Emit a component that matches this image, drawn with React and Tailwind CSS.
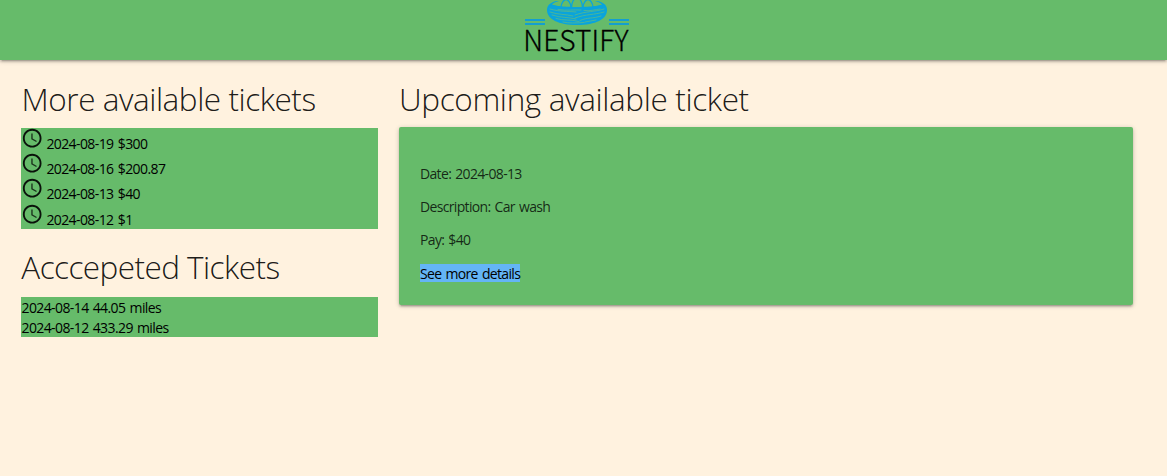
const tickets = [
  { date: "2024-08-19", pay: "$300" },
  { date: "2024-08-16", pay: "$200.87" },
  { date: "2024-08-13", pay: "$40" },
  { date: "2024-08-12", pay: "$1" },
];

const accepted = ["2024-08-14 44.05 miles", "2024-08-12 433.29 miles"];

function Clock() {
  return (
    <svg viewBox="0 0 24 24" className="-mt-[1.1px] mr-[3px] size-[22.4px] shrink-0 fill-black/90" aria-hidden="true">
      <path d="M11.99 2C6.47 2 2 6.48 2 12s4.47 10 9.99 10C17.52 22 22 17.52 22 12S17.52 2 11.99 2zM12 20c-4.42 0-8-3.58-8-8s3.58-8 8-8 8 3.58 8 8-3.58 8-8 8z" />
      <path d="M12.5 7H11v6l5.25 3.15.75-1.23-4.5-2.67z" fillOpacity=".8" />
    </svg>
  );
}

function Nest() {
  return (
    <svg viewBox="0 0 106 26" className="block h-[26px] w-[106px]" fill="none" aria-hidden="true">
      <g stroke="#139fd0" strokeWidth="1.8">
        <path d="M0 20H20M0 24H20M84 20H104M84 24H104" />
      </g>
      <path d="M22 10C22 6 24 3 31 1H73C80 3 82 6 82 10C82 19 71 25 52 25S22 19 22 10Z" fill="#09a4dc" />
      <path d="M27 4.500C29 2 34 1 38 0H66C70 1 75 2 77 4.500C71 6.500 65 7 52 7S33 6.500 27 4.500Z" fill="#66bb6a" />
      <g fill="#66bb6a" stroke="#09a4dc" strokeWidth="1.3">
        <path d="M36 7.500C36 3 39-.5 41-.5S46 3 46 7.500Z" />
        <path d="M58 7.500C58 3 61-.5 63-.5S68 3 68 7.500Z" />
        <path d="M46.500 8C46.500 2 49-2 52-2S57.500 2 57.500 8Z" />
      </g>
      <path d="M25 4.500C29 5.500 33 6 37 6.500C42 7.500 62 7.500 67 6.500C71 6 75 5.500 79 4.500V9H25Z" fill="#09a4dc" />
      <g stroke="#5dba86" strokeWidth=".75" strokeLinecap="round">
        <path d="M25 9C36 12 42 11 51 12M25 12C34 15 40 14 48 16M27 15C36 18 43 17 51 19M31 18.500C39 21 45 19 54 21.500M38 22C44 23.500 51 23 59 22.500" />
        <path d="M79 9C70 12 61 11 50 15M79 12C69 15 61 14 50 18M76 16C67 19 63 17 55 20.500M71 20C67 21 64 21 60 22M59 10.500C65 11.500 70 9.500 75 9M33 9.500C42 11 49 9.500 56 10" />
      </g>
    </svg>
  );
}

function Heading({ children, className }) {
  return <h4 className={`whitespace-nowrap text-[31.5px] font-[350] text-black/90 ${className}`}>{children}</h4>;
}

export default function App() {
  return (
    <div className="min-h-screen bg-[#fff2df] font-['Open_Sans','Noto_Sans',sans-serif] text-[14px] text-black">
      <header className="flex h-[60px] flex-col items-center overflow-hidden bg-[#66bb6a] pr-[12px] shadow-[0_2px_2px_0_rgba(0,0,0,0.14),0_3px_1px_-2px_rgba(0,0,0,0.12),0_1px_5px_0_rgba(0,0,0,0.2)]">
        <Nest />
        <div className="-mt-px whitespace-nowrap pr-[3px] font-['Noto_Sans_CJK_SC',sans-serif] text-[28px] font-light leading-[28px] tracking-[0.1px] [-webkit-text-stroke:0.3px_black]">NESTIFY</div>
      </header>
      <main className="grid grid-cols-[357px_734px] gap-[21px] pl-[21px] pt-[21px]">
        <section>
          <Heading className="pl-[0.6px] leading-[35px] tracking-[-0.45px]">More available tickets</Heading>
          <ul className="mt-[12px] bg-[#66bb6a]">
            {tickets.map((t) => (
              <li key={t.date} className="flex h-[25.25px] items-start">
                <Clock />
                <span className="whitespace-nowrap pt-[5.8px] leading-[20px] tracking-[-0.6px] [word-spacing:1.3px]">
                  {t.date} {t.pay}
                </span>
              </li>
            ))}
          </ul>
          <Heading className="mt-[21px] pl-[0.3px] leading-[34px] tracking-[-0.56px]">Acccepeted Tickets</Heading>
          <ul className="mt-[13px] bg-[#66bb6a]">
            {accepted.map((a) => (
              <li key={a} className="h-[20px] whitespace-nowrap pl-[0.5px] pt-px leading-[20px] tracking-[-0.6px] [word-spacing:1.1px]">
                {a}
              </li>
            ))}
          </ul>
        </section>
        <section>
          <Heading className="leading-[35px] tracking-[-0.36px]">Upcoming available ticket</Heading>
          <article className="mt-[11px] h-[178px] rounded-[2px] bg-[#66bb6a] px-[21px] pt-[36.6px] shadow-[0_2px_2px_0_rgba(0,0,0,0.14),0_3px_1px_-2px_rgba(0,0,0,0.12),0_1px_5px_0_rgba(0,0,0,0.2)]">
            <div className="flex flex-col items-start gap-[13.4px] whitespace-nowrap leading-[20px] tracking-[-0.66px] text-black/80 [word-spacing:1.1px]">
              <p>Date: 2024-08-13</p>
              <p>Description: Car wash</p>
              <p>Pay: $40</p>
              <a href="#details" className="mt-[0.4px] bg-[#64b5f6] pt-px leading-[17px] text-black">See more details</a>
            </div>
          </article>
        </section>
      </main>
    </div>
  );
}
